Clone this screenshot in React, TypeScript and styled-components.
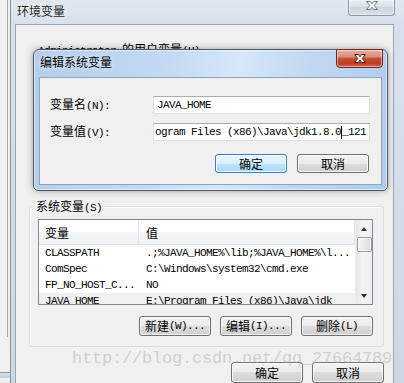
import React from 'react';
import styled, { createGlobalStyle } from 'styled-components';

const GlobalStyle = createGlobalStyle`
  html, body { margin: 0; padding: 0; }
  body {
    width: 404px; height: 383px; overflow: hidden; background: #f0f0f0;
    font-family: "Noto Sans CJK SC", "Noto Sans", sans-serif; font-size: 12px; color: #000;
  }
  * { box-sizing: border-box; }
`;

const Screen = styled.div`
  position: relative;
  display: flex;
  width: 404px;
  height: 383px;
  overflow: hidden;
  background: #f0f0f0;
`;

const Backdrop = styled.div`
  flex: 0 0 10px;
  display: flex;
  flex-direction: column;
`;
const BackPane = styled.div`
  width: 8px;
  height: 337px;
  border-right: 1px solid #a9a9a9;
`;
const BackGap = styled.div`
  flex: 0 0 35px;
`;
const BackBar = styled.div`
  height: 6px;
  border-top: 1px solid #8e9cac;
  background: linear-gradient(#d4dee9, #c3cfdc);
`;

const Window = styled.div`
  flex: 1;
  display: flex;
  flex-direction: column;
  border-left: 1px solid #8592a2;
  padding: 0 10px 0 4px;
  background: linear-gradient(180deg, #e0e7ef 0px, #d8e1eb 24px, #cdd8e4 100%);
`;

const TitleBar = styled.div`
  height: 24px;
  flex: none;
  display: flex;
  justify-content: space-between;
  align-items: flex-start;
  margin-right: -10px;
`;

const WindowTitle = styled.span`
  margin: 3px 0 0 2px;
  line-height: 16px;
  font-size: 12px;
  color: #1e1e1e;
  text-shadow: 0 0 6px rgba(255, 255, 255, 0.9);
`;

const CloseButton = styled.div<{ $active?: boolean; $h: number; $mr: number; $mt: number }>`
  width: 47px;
  height: ${p => p.$h}px;
  margin: ${p => p.$mt}px ${p => p.$mr}px 0 0;
  display: flex;
  justify-content: center;
  align-items: ${p => (p.$active ? 'center' : 'flex-start')};
  border: 1px solid ${p => (p.$active ? '#6a2a20' : '#8d99a8')};
  border-top: ${p => (p.$active ? '1px solid #6a2a20' : 'none')};
  border-radius: 0 0 4px 4px;
  background: ${p =>
    p.$active
      ? 'linear-gradient(#eab0a2 0%, #dc8c78 40%, #c84e34 50%, #bb3d22 78%, #d76a4c 100%)'
      : 'linear-gradient(#e9eef4 0%, #dbe2ea 45%, #cdd6e0 50%, #d8e0e8 100%)'};
  box-shadow: inset 0 0 0 1px rgba(255, 255, 255, 0.45);
`;

const Client = styled.div`
  flex: 1;
  display: flex;
  flex-direction: column;
  background: #f0f0f0;
  border: 1px solid #97a5b5;
  border-bottom: none;
`;

const UserSection = styled.div`
  flex: 0 0 181px;
  padding: 16px 0 0 22px;
`;

const SectionLabel = styled.div`
  line-height: 16px;
  white-space: pre;
`;

const Latin = styled.span`
  font-family: "Liberation Mono", "DejaVu Sans Mono", monospace;
  font-size: 11px;
  letter-spacing: -0.6px;
`;

const Group = styled.div`
  position: relative;
  margin: 0 9px 0 13px;
  border: 1px solid #d5dfe5;
  border-radius: 3px;
  box-shadow: inset 1px 1px 0 #fff;
  padding: 12px 10px 10px 8px;
  display: flex;
  flex-direction: column;
`;

const GroupLabel = styled.span`
  position: absolute;
  top: -9px;
  left: 4px;
  padding: 0 2px;
  line-height: 16px;
  background: #f0f0f0;
  white-space: pre;
`;

const ListView = styled.div`
  height: 86px;
  border: 1px solid #828790;
  background: #fff;
  display: flex;
  overflow: hidden;
`;

const ListBody = styled.div`
  flex: 1;
  display: flex;
  flex-direction: column;
  overflow: hidden;
`;

const Header = styled.div`
  flex: 0 0 25px;
  display: grid;
  grid-template-columns: 100px 1fr;
  background: linear-gradient(#ffffff 0%, #ffffff 50%, #f4f5f7 50%, #f1f2f4 100%);
  border-bottom: 1px solid #e3e5e8;
`;

const HeaderCell = styled.div<{ $pad: number }>`
  display: flex;
  align-items: center;
  padding-left: ${p => p.$pad}px;
  font-size: 12px;
  border-right: 1px solid #e3e5e7;
`;

const Row = styled.div<{ $sel?: boolean }>`
  flex: 0 0 16px;
  display: grid;
  grid-template-columns: 100px 1fr;
  align-items: center;
  background: ${p => (p.$sel ? '#f0f0f0' : '#fff')};
`;

const Cell = styled.div<{ $pad: number }>`
  padding-left: ${p => p.$pad}px;
  white-space: pre;
  overflow: hidden;
  line-height: 16px;
  font-family: "Liberation Mono", "DejaVu Sans Mono", monospace;
  font-size: 11px;
  letter-spacing: -0.6px;
`;

const ScrollBar = styled.div`
  flex: 0 0 17px;
  display: flex;
  flex-direction: column;
  align-items: center;
  background: linear-gradient(90deg, #e6e6e6, #f4f4f4 40%, #f0f0f0);
  border-left: 1px solid #ececec;
`;

const ArrowBox = styled.div`
  flex: 0 0 17px;
  width: 100%;
  display: flex;
  align-items: center;
  justify-content: center;
`;

const Tri = styled.span<{ $down?: boolean }>`
  width: 0;
  height: 0;
  border-left: 3.5px solid transparent;
  border-right: 3.5px solid transparent;
  ${p => (p.$down ? 'border-top: 4px solid #333;' : 'border-bottom: 4px solid #333;')}
`;

const Thumb = styled.div`
  flex: 0 0 15px;
  width: 15px;
  border: 1px solid #9c9c9c;
  border-radius: 2px;
  background: linear-gradient(90deg, #f6f6f6, #e9e9e9 50%, #dcdcdc);
  box-shadow: inset 0 0 0 1px rgba(255, 255, 255, 0.7);
`;

const Track = styled.div`
  flex: 1;
`;

const ButtonRow = styled.div<{ $gap: number; $mt: number; $pr: number }>`
  display: flex;
  justify-content: flex-end;
  gap: ${p => p.$gap}px;
  margin-top: ${p => p.$mt}px;
  padding-right: ${p => p.$pr}px;
`;

const Button = styled.div<{ $default?: boolean; $h: number }>`
  width: 72px;
  height: ${p => p.$h}px;
  display: flex;
  align-items: center;
  justify-content: center;
  white-space: pre;
  border: 1px solid ${p => (p.$default ? '#3c7fb1' : '#707070')};
  border-radius: 3px;
  background: ${p =>
    p.$default
      ? 'linear-gradient(#eaf6fd 0%, #d9f0fc 50%, #bee6fd 50%, #a7d9f5 100%)'
      : 'linear-gradient(#f2f2f2 0%, #ebebeb 50%, #dddddd 50%, #cfcfcf 100%)'};
  box-shadow: inset 0 0 0 1px rgba(255, 255, 255, 0.75);
  font-size: 12px;
  line-height: 14px;
`;

const Dialog = styled.div`
  position: absolute;
  left: 33px;
  top: 49px;
  width: 355px;
  height: 142px;
  display: flex;
  flex-direction: column;
  border: 1px solid #4b5866;
  border-radius: 6px 6px 5px 5px;
  background: linear-gradient(100deg, #b4cdea 0%, #c3d9f1 35%, #d6e7f8 55%, #c0d7f0 75%, #b0cae8 100%);
  box-shadow: 0 0 7px rgba(0, 0, 0, 0.35), inset 0 0 0 1px rgba(255, 255, 255, 0.55);
`;

const DialogTitleBar = styled.div`
  flex: 0 0 27px;
  display: flex;
  justify-content: space-between;
  align-items: flex-start;
  padding: 0 4px 0 6px;
`;

const DialogTitle = styled.span`
  margin-top: 4px;
  line-height: 16px;
  font-size: 12px;
  text-shadow: 0 0 6px rgba(255, 255, 255, 0.95);
`;

const DialogBody = styled.div`
  flex: 1;
  display: flex;
  padding: 0 5px 5px 5px;
`;

const DialogClient = styled.div`
  flex: 1;
  background: #f0f0f0;
  border: 1px solid #8ea3ba;
  padding: 18px 11px 0 10px;
`;

const FormGrid = styled.div`
  display: grid;
  grid-template-columns: 103px 1fr;
  grid-auto-rows: 18px;
  row-gap: 9px;
  align-items: center;
`;

const FieldLabel = styled.div`
  line-height: 18px;
  white-space: pre;
`;

const TextBox = styled.div<{ $pl: number }>`
  height: 18px;
  display: flex;
  align-items: center;
  padding: 0 2px 0 ${p => p.$pl}px;
  background: #fff;
  border: 1px solid #dbdfe6;
  border-top-color: #abadb3;
  border-left-color: #e2e3ea;
  overflow: hidden;
  white-space: pre;
  font-family: "Liberation Mono", "DejaVu Sans Mono", monospace;
  font-size: 11px;
  letter-spacing: -0.6px;
`;

const Caret = styled.span`
  display: inline-block;
  width: 0;
  height: 13px;
  border-left: 1px solid #000;
`;

const Watermark = styled.div`
  position: absolute;
  left: 72px;
  top: 350px;
  font-family: "Liberation Mono", "DejaVu Sans Mono", monospace;
  font-size: 17px;
  letter-spacing: -0.2px;
  line-height: 18px;
  color: rgba(160, 160, 160, 0.42);
  white-space: pre;
  pointer-events: none;
`;

const CloseX: React.FC<{ fill: string; stroke: string }> = ({ fill, stroke }) => (
  <svg width="14" height="11" viewBox="0 0 14 11">
    <path
      d="M1.5 1.5 H5.2 L7 3.8 L8.8 1.5 H12.5 L9.2 5.5 L12.5 9.5 H8.8 L7 7.2 L5.2 9.5 H1.5 L4.8 5.5 Z"
      fill={fill}
      stroke={stroke}
      strokeWidth="1"
      strokeLinejoin="round"
    />
  </svg>
);

const rows: { name: string; value: string; sel?: boolean }[] = [
  { name: 'CLASSPATH', value: '.;%JAVA_HOME%\\lib;%JAVA_HOME%\\l...' },
  { name: 'ComSpec', value: 'C:\\Windows\\system32\\cmd.exe' },
  { name: 'FP_NO_HOST_C...', value: 'NO' },
  { name: 'JAVA_HOME', value: 'E:\\Program Files (x86)\\Java\\jdk', sel: true },
];

export default function App() {
  return (
    <>
      <GlobalStyle />
      <Screen>
        <Backdrop>
          <BackPane />
          <BackGap />
          <BackBar />
        </Backdrop>
        <Window>
          <TitleBar>
            <WindowTitle>环境变量</WindowTitle>
            <CloseButton $h={16} $mr={9} $mt={0}>
              <CloseX fill="#f7f9fb" stroke="#6b7683" />
            </CloseButton>
          </TitleBar>
          <Client>
            <UserSection>
              <SectionLabel>
                <Latin>Administrator </Latin>的用户变量<Latin>(U)</Latin>
              </SectionLabel>
            </UserSection>
            <Group>
              <GroupLabel>
                系统变量<Latin>(S)</Latin>
              </GroupLabel>
              <ListView>
                <ListBody>
                  <Header>
                    <HeaderCell $pad={6}>变量</HeaderCell>
                    <HeaderCell $pad={7}>值</HeaderCell>
                  </Header>
                  {rows.map(r => (
                    <Row key={r.name} $sel={r.sel}>
                      <Cell $pad={6}>{r.name}</Cell>
                      <Cell $pad={7}>{r.value}</Cell>
                    </Row>
                  ))}
                </ListBody>
                <ScrollBar>
                  <ArrowBox>
                    <Tri />
                  </ArrowBox>
                  <Thumb />
                  <Track />
                  <ArrowBox>
                    <Tri $down />
                  </ArrowBox>
                </ScrollBar>
              </ListView>
              <ButtonRow $gap={9} $mt={11} $pr={0}>
                <Button $h={20}>
                  新建<Latin>(W)...</Latin>
                </Button>
                <Button $h={20}>
                  编辑<Latin>(I)...</Latin>
                </Button>
                <Button $h={20}>
                  删除<Latin>(L)</Latin>
                </Button>
              </ButtonRow>
            </Group>
            <ButtonRow $gap={9} $mt={15} $pr={9}>
              <Button $h={21}>确定</Button>
              <Button $h={21}>取消</Button>
            </ButtonRow>
          </Client>
        </Window>

        <Dialog>
          <DialogTitleBar>
            <DialogTitle>编辑系统变量</DialogTitle>
            <CloseButton $active $h={19} $mr={0} $mt={-1}>
              <CloseX fill="#ffffff" stroke="#4a1a12" />
            </CloseButton>
          </DialogTitleBar>
          <DialogBody>
            <DialogClient>
              <FormGrid>
                <FieldLabel>
                  变量名<Latin>(N):</Latin>
                </FieldLabel>
                <TextBox $pl={3}>JAVA_HOME</TextBox>
                <FieldLabel>
                  变量值<Latin>(V):</Latin>
                </FieldLabel>
                <TextBox $pl={1}>
                  {'ogram Files (x86)\\Java\\jdk1.8.0'}
                  <Caret />
                  {'_121'}
                </TextBox>
              </FormGrid>
              <ButtonRow $gap={10} $mt={13} $pr={1}>
                <Button $default $h={19}>
                  确定
                </Button>
                <Button $h={19}>取消</Button>
              </ButtonRow>
            </DialogClient>
          </DialogBody>
        </Dialog>

        <Watermark>http://blog.csdn.net/qq_27664789</Watermark>
      </Screen>
    </>
  );
}
